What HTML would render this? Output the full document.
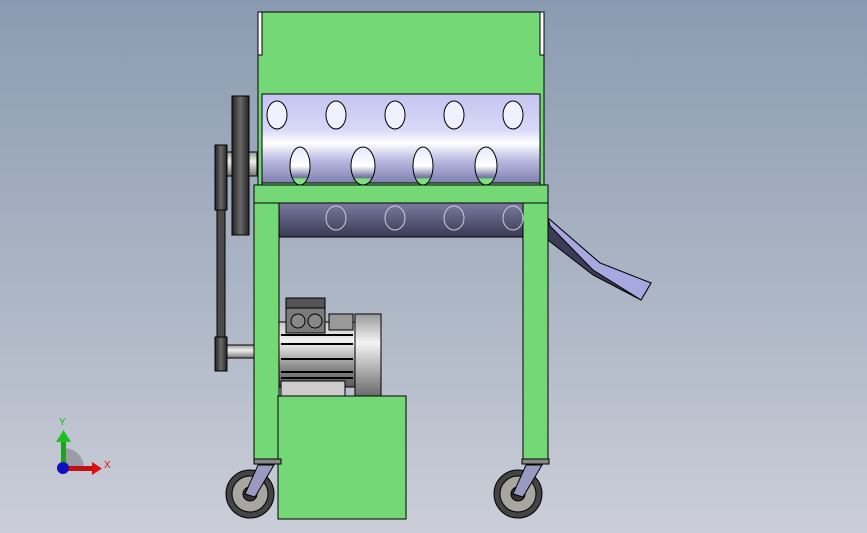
<!DOCTYPE html>
<html><head><style>
html,body{margin:0;padding:0;width:867px;height:533px;overflow:hidden}
body{background:linear-gradient(#8a9bb1,#a9b3c3 50%,#cbced8)}
svg{position:absolute;left:0;top:0}
</style></head><body>
<svg width="867" height="533" viewBox="0 0 867 533">
<defs>
<linearGradient id="drum" x1="0" y1="0" x2="0" y2="1">
<stop offset="0" stop-color="#c4c4f0"/><stop offset="0.4" stop-color="#d8d8f8"/><stop offset="0.55" stop-color="#ffffff"/><stop offset="0.75" stop-color="#b8b8e0"/><stop offset="1" stop-color="#8080b0"/></linearGradient>
<linearGradient id="drum2" x1="0" y1="0" x2="0" y2="1">
<stop offset="0" stop-color="#7a7aa0"/><stop offset="1" stop-color="#3a3a55"/></linearGradient>
<linearGradient id="hole" x1="0" y1="0" x2="0" y2="1">
<stop offset="0" stop-color="#e8e8ff"/><stop offset="0.5" stop-color="#ffffff"/><stop offset="0.8" stop-color="#7070a0"/><stop offset="0.85" stop-color="#80e080"/><stop offset="1" stop-color="#80e080"/></linearGradient>
<linearGradient id="motor" x1="0" y1="0" x2="0" y2="1">
<stop offset="0" stop-color="#c8c8c8"/><stop offset="0.3" stop-color="#f2f2f2"/><stop offset="0.7" stop-color="#8a8a8a"/><stop offset="1" stop-color="#5a5a5a"/></linearGradient>
<linearGradient id="cap" x1="0" y1="0" x2="0" y2="1">
<stop offset="0" stop-color="#9a9a9a"/><stop offset="0.35" stop-color="#f4f4f4"/><stop offset="1" stop-color="#6a6a6a"/></linearGradient>
<linearGradient id="pul" x1="0" y1="0" x2="1" y2="0">
<stop offset="0" stop-color="#222"/><stop offset="0.5" stop-color="#6a6a6a"/><stop offset="1" stop-color="#222"/></linearGradient>
<linearGradient id="shaft" x1="0" y1="0" x2="0" y2="1">
<stop offset="0" stop-color="#999"/><stop offset="0.4" stop-color="#eee"/><stop offset="1" stop-color="#777"/></linearGradient>
</defs>
<g stroke="#000" stroke-width="1">
<polygon points="548,218 600,263 651,283 641,300 593,275 548,240" fill="#3c3c58"/>
<polygon points="548,218 600,263 651,283 641,300 593,270 550,226" fill="#a8a8e0"/>
<rect x="217" y="148" width="8" height="222" fill="#4a4a4a"/>
<rect x="215" y="145" width="12" height="65" fill="url(#pul)"/>
<rect x="215" y="337" width="12" height="34" fill="url(#pul)"/>
<rect x="227" y="345" width="27" height="13" fill="url(#shaft)"/>
<rect x="227" y="152" width="30" height="24" fill="url(#shaft)"/>
<rect x="232" y="96" width="17" height="139" fill="url(#pul)"/>
<rect x="279" y="203" width="244" height="34" fill="url(#drum2)"/>
<rect x="258" y="12" width="286" height="182" fill="#74d877"/>
<rect x="258" y="12" width="4" height="43" fill="#fff"/>
<rect x="540" y="12" width="4" height="43" fill="#fff"/>
<rect x="262" y="94" width="278" height="89" fill="url(#drum)"/>
<rect x="262" y="183" width="278" height="11" fill="#74d877"/>
<rect x="254" y="185" width="294" height="18" fill="#74d877"/>
<rect x="254" y="203" width="25" height="257" fill="#74d877"/>
<rect x="523" y="203" width="25" height="257" fill="#74d877"/>
</g>
<g stroke="#000" stroke-width="1">
<g fill="#f0f0ff">
<ellipse cx="277" cy="115" rx="10" ry="14"/><ellipse cx="336" cy="115" rx="10" ry="14"/><ellipse cx="395" cy="115" rx="10" ry="14"/><ellipse cx="454" cy="115" rx="10" ry="14"/><ellipse cx="513" cy="115" rx="10" ry="14"/>
</g>
<g fill="url(#hole)">
<ellipse cx="300" cy="166" rx="10" ry="19"/><ellipse cx="363" cy="166" rx="12" ry="19"/><ellipse cx="423" cy="166" rx="10" ry="19"/><ellipse cx="486" cy="166" rx="11" ry="19"/>
</g>
<g fill="none" stroke="#ccd">
<ellipse cx="336" cy="218" rx="10" ry="12"/><ellipse cx="395" cy="218" rx="10" ry="12"/><ellipse cx="454" cy="218" rx="10" ry="12"/><ellipse cx="513" cy="218" rx="10" ry="12"/>
</g>
</g>
<g stroke="#000" stroke-width="1">
<rect x="279" y="322" width="76" height="65" fill="url(#motor)"/>
<g stroke-width="2"><line x1="281" y1="335" x2="353" y2="335"/><line x1="281" y1="344" x2="353" y2="344"/><line x1="281" y1="359" x2="353" y2="359"/><line x1="281" y1="372" x2="353" y2="372"/><line x1="281" y1="378" x2="353" y2="378"/></g>
<rect x="286" y="298" width="39" height="35" fill="#7a7a7a"/>
<rect x="286" y="298" width="39" height="10" fill="#555"/>
<circle cx="298" cy="321" r="7" fill="#888"/><circle cx="315" cy="321" r="7" fill="#888"/>
<rect x="329" y="314" width="24" height="16" fill="#999"/>
<rect x="355" y="314" width="26" height="82" fill="url(#cap)"/>
<rect x="281" y="381" width="64" height="15" fill="#ccc"/>
<rect x="278" y="396" width="128" height="123" fill="#74d877"/>
<rect x="254" y="459" width="27" height="5" fill="#888"/>
<rect x="522" y="459" width="27" height="5" fill="#888"/>
<circle cx="250" cy="494" r="24" fill="#444"/><circle cx="250" cy="494" r="18" fill="#a8a6a0"/><circle cx="250" cy="494" r="7" fill="#333"/>
<polygon points="258,465 274,465 255,497 245,494" fill="#9a9ac0"/>
<circle cx="518" cy="494" r="24" fill="#444"/><circle cx="518" cy="494" r="18" fill="#a8a6a0"/><circle cx="518" cy="494" r="7" fill="#333"/>
<polygon points="526,465 542,465 523,497 513,494" fill="#9a9ac0"/>
</g>
<path d="M64 468 L64 448 A20 20 0 0 1 84 468 Z" fill="#8a8a90" opacity="0.7"/>
<rect x="61" y="440" width="5" height="27" fill="#20a020"/>
<polygon points="56,442 63.5,430 71,442" fill="#20c020"/>
<rect x="64" y="466" width="28" height="5" fill="#c01010"/>
<polygon points="92,462 102,468.5 92,475" fill="#e01010"/>
<circle cx="63" cy="468" r="6" fill="#1010c0"/>
<text x="59" y="425" font-family="Liberation Sans,sans-serif" font-size="10" fill="#10c010">Y</text>
<text x="104" y="468" font-family="Liberation Sans,sans-serif" font-size="10" fill="#e01010">X</text>
</svg>
</body></html>
